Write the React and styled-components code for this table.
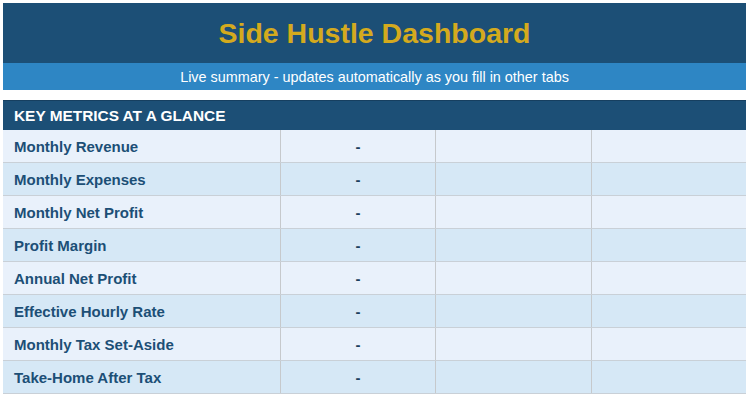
import React from 'react';
import styled, { createGlobalStyle } from 'styled-components';

const metrics = [
  'Monthly Revenue',
  'Monthly Expenses',
  'Monthly Net Profit',
  'Profit Margin',
  'Annual Net Profit',
  'Effective Hourly Rate',
  'Monthly Tax Set-Aside',
  'Take-Home After Tax',
];

const App = () => {
  return (
    <>
      <GlobalStyle />
      <Sheet>
        <Banner>
          <Title>Side Hustle Dashboard</Title>
        </Banner>
        <SubBar>Live summary - updates automatically as you fill in other tabs</SubBar>
        <Section>
          <SectionHeader>KEY METRICS AT A GLANCE</SectionHeader>
          {metrics.map((label, i) => (
            <Row key={label} $alt={i % 2 === 1}>
              <Label>{label}</Label>
              <Value>-</Value>
              <Cell />
              <Cell />
            </Row>
          ))}
        </Section>
      </Sheet>
    </>
  );
};

export default App;

const GlobalStyle = createGlobalStyle`
  body {
    margin: 0;
    background: #ffffff;
    font-family: 'Liberation Sans', Arial, sans-serif;
  }
`;

const Sheet = styled.div`
  width: 743px;
  padding: 3px 0 0 3px;
  display: flex;
  flex-direction: column;
`;

const Banner = styled.div`
  height: 60px;
  background-color: #1c4f76;
  display: flex;
  align-items: center;
  justify-content: center;
`;

const Title = styled.h1`
  margin: 0;
  font-size: 28.5px;
  font-weight: 700;
  color: #d4aa1e;
  padding-top: 1px;
`;

const SubBar = styled.div`
  height: 27px;
  background-color: #2e86c4;
  color: #ffffff;
  font-size: 14.4px;
  display: flex;
  align-items: center;
  justify-content: center;
`;

const Section = styled.div`
  margin-top: 10px;
  display: flex;
  flex-direction: column;
`;

const SectionHeader = styled.div`
  height: 29px;
  background-color: #1c4f76;
  border-top: 1px solid #163f60;
  color: #ffffff;
  font-size: 15.4px;
  font-weight: 700;
  display: flex;
  align-items: center;
  padding-left: 11px;
`;

const Row = styled.div`
  display: grid;
  grid-template-columns: 277px 155px 156px 155px;
  height: 33px;
  box-sizing: border-box;
  border-bottom: 1px solid #c9d0d7;
  background-color: ${(p) => (p.$alt ? '#d6e8f6' : '#e9f1fb')};
`;

const Cell = styled.div`
  border-left: 1px solid #c6c9cc;
  display: flex;
  align-items: center;
`;

const Label = styled.div`
  display: flex;
  align-items: center;
  padding-left: 11px;
  font-size: 15px;
  font-weight: 700;
  color: #1c4f76;
`;

const Value = styled(Cell)`
  justify-content: center;
  font-size: 15px;
  font-weight: 700;
  color: #1c3f5e;
`;
